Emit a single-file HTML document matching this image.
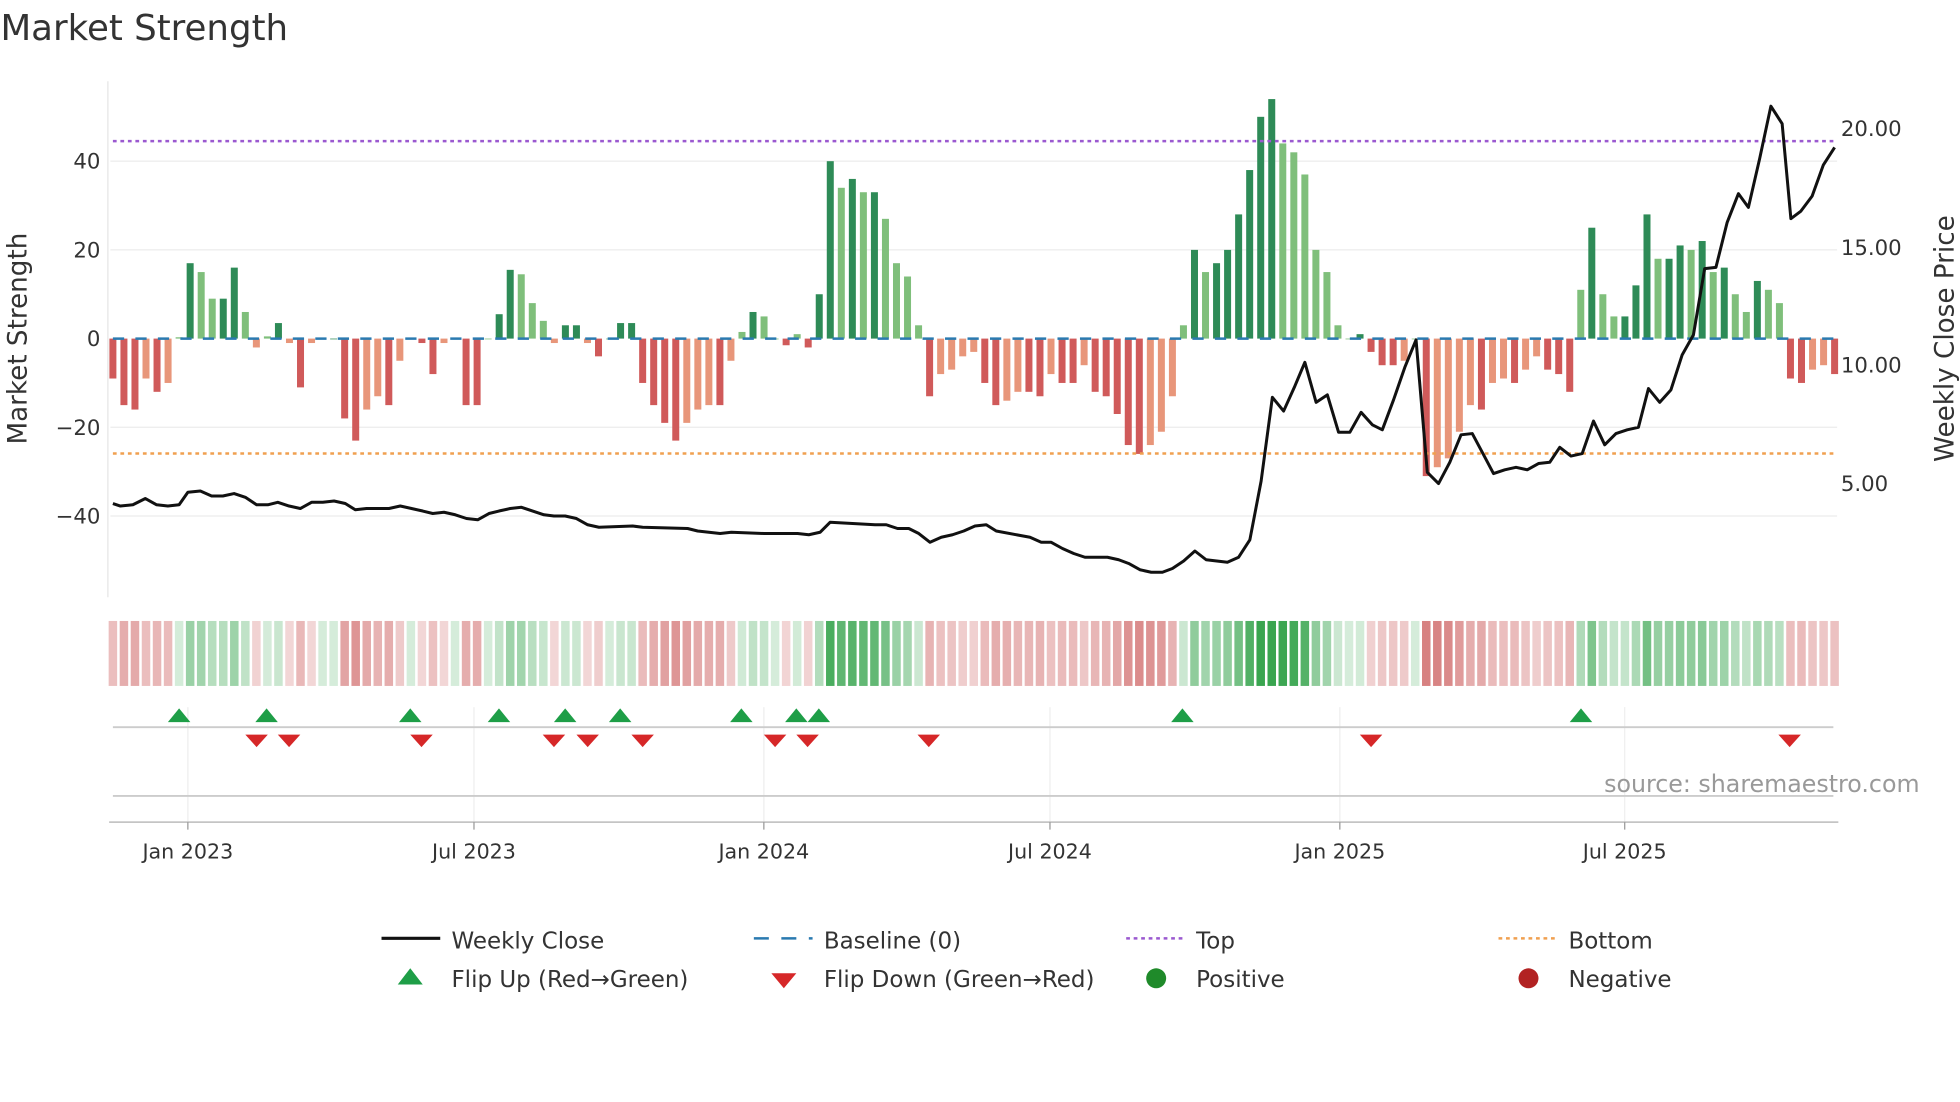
<!DOCTYPE html>
<html><head><meta charset="utf-8"><style>
html,body{margin:0;padding:0;background:#fff;width:1960px;height:1102px;overflow:hidden}
svg{display:block}
text{font-family:"DejaVu Sans","Liberation Sans",sans-serif;fill:#333}
</style></head><body>
<svg id="s" width="1960" height="1102" viewBox="0 0 1568 882" xmlns="http://www.w3.org/2000/svg">
<rect width="1568" height="882" fill="#fff"/>
<text x="0" y="32" font-size="28.5">Market Strength</text>
<g id="grid" stroke="#ececec" stroke-width="1">
<line x1="88" y1="129" x2="1470" y2="129"/><line x1="88" y1="200" x2="1470" y2="200"/>
<line x1="88" y1="342" x2="1470" y2="342"/><line x1="88" y1="413" x2="1470" y2="413"/>
</g>
<line x1="86" y1="65" x2="86" y2="478" stroke="#e6e6e6"/>
<g font-size="17" text-anchor="end">
<text x="80" y="135">40</text><text x="80" y="206">20</text><text x="80" y="277">0</text>
<text x="80" y="348">−20</text><text x="80" y="419">−40</text></g>
<g font-size="17"><text x="1473" y="109">20.00</text><text x="1473" y="204">15.00</text>
<text x="1473" y="298">10.00</text><text x="1473" y="393">5.00</text></g>
<text font-size="21" transform="translate(21,271) rotate(-90)" text-anchor="middle">Market Strength</text>
<text font-size="21" transform="translate(1563,271) rotate(-90)" text-anchor="middle">Weekly Close Price</text>
<g id="bars"></g>
<line x1="90" y1="271" x2="1468" y2="271" stroke="#2a7ab0" stroke-width="2" stroke-dasharray="9,9"/>
<line x1="90" y1="113" x2="1468" y2="113" stroke="#9b59d0" stroke-width="2" stroke-dasharray="3,3"/>
<line x1="90" y1="363" x2="1468" y2="363" stroke="#f0a050" stroke-width="2" stroke-dasharray="3,3"/>
<polyline id="pl" fill="none" stroke="#111" stroke-width="2.4" stroke-linejoin="round"/>
<g id="heat"></g>
<g stroke="#eee"><line x1="150" y1="566" x2="150" y2="658"/><line x1="379" y1="566" x2="379" y2="658"/><line x1="611" y1="566" x2="611" y2="658"/><line x1="840" y1="566" x2="840" y2="658"/><line x1="1072" y1="566" x2="1072" y2="658"/><line x1="1300" y1="566" x2="1300" y2="658"/></g>
<line x1="90" y1="582" x2="1467" y2="582" stroke="#ccc" stroke-width="1.5"/>
<line x1="90" y1="637" x2="1467" y2="637" stroke="#ccc" stroke-width="1.5"/>
<line x1="87" y1="658" x2="1471" y2="658" stroke="#bbb" stroke-width="1.2"/>
<g stroke="#999"><line x1="150" y1="658" x2="150" y2="664"/><line x1="379" y1="658" x2="379" y2="664"/><line x1="611" y1="658" x2="611" y2="664"/><line x1="840" y1="658" x2="840" y2="664"/><line x1="1072" y1="658" x2="1072" y2="664"/><line x1="1300" y1="658" x2="1300" y2="664"/></g>
<g id="tri"></g>
<text x="1536" y="634" font-size="19" text-anchor="end" style="fill:#999">source: sharemaestro.com</text>
<g font-size="16.5" text-anchor="middle"><text x="150" y="687">Jan 2023</text><text x="379" y="687">Jul 2023</text><text x="611" y="687">Jan 2024</text><text x="840" y="687">Jul 2024</text><text x="1072" y="687">Jan 2025</text><text x="1300" y="687">Jul 2025</text></g>
<g font-size="18.4">
<line x1="305" y1="751" x2="352" y2="751" stroke="#111" stroke-width="2.5"/><text x="361" y="759">Weekly Close</text>
<line x1="603" y1="751" x2="650" y2="751" stroke="#2a7ab0" stroke-width="2" stroke-dasharray="12,10"/><text x="659" y="759">Baseline (0)</text>
<line x1="901" y1="751" x2="948" y2="751" stroke="#9b59d0" stroke-width="2" stroke-dasharray="3,3"/><text x="957" y="759">Top</text>
<line x1="1199" y1="751" x2="1246" y2="751" stroke="#f0a050" stroke-width="2" stroke-dasharray="3,3"/><text x="1255" y="759">Bottom</text>
<polygon points="318,788 328,775 338,788" fill="#1e9e47"/><text x="361" y="790">Flip Up (Red→Green)</text>
<polygon points="617,779 627,791 637,779" fill="#d62728"/><text x="659" y="790">Flip Down (Green→Red)</text>
<circle cx="925" cy="783" r="8" fill="#1f8a2a"/><text x="957" y="790">Positive</text>
<circle cx="1223" cy="783" r="8" fill="#b22222"/><text x="1255" y="790">Negative</text>
</g>
</svg>
<script>
var v=[-9,-15,-16,-9,-12,-10,0.3,17,15,9,9,16,6,-2,0.5,3.5,-1,-11,-1,0,0,-18,-23,-16,-13,-15,-5,0,-1,-8,-1,0,-15,-15,0,5.5,15.5,14.5,8,4,-1,3,3,-1,-4,0,3.5,3.5,-10,-15,-19,-23,-19,-16,-15,-15,-5,1.5,6,5,0,-1.5,1,-2,10,40,34,36,33,33,27,17,14,3,-13,-8,-7,-4,-3,-10,-15,-14,-12,-12,-13,-8,-10,-10,-6,-12,-13,-17,-24,-26,-24,-21,-13,3,20,15,17,20,28,38,50,54,44,42,37,20,15,3,0,1,-3,-6,-6,-5,0,-31,-29,-27,-21,-15,-16,-10,-9,-10,-7,-4,-7,-8,-12,11,25,10,5,5,12,28,18,18,21,20,22,15,16,10,6,13,11,8,-9,-10,-7,-6,-8];
var NS="http://www.w3.org/2000/svg",n=v.length,x0=90,dx=(1468-90)/(n-1);
function el(g,t,a){var e=document.createElementNS(NS,t);for(var k in a)e.setAttribute(k,a[k]);document.getElementById(g).appendChild(e);}
for(var i=0;i<n;i++){var x=x0+i*dx,y=v[i],p=i?v[i-1]:0,dark=Math.abs(y)>=Math.abs(p);
var c=y>=0?(dark?"#2e8b57":"#7fbf7b"):(dark?"#d05a5a":"#e8967a");
var h=Math.abs(y)*3.55;el("bars","rect",{x:x-2.8,y:y>=0?271-h:271,width:5.6,height:Math.max(h,0.6),fill:c});
var hc;
if(y>=0){hc="rgba(46,160,70,"+(0.2+0.75*Math.min(Math.abs(y)/45,1))+")";}
else{hc="rgba(200,80,80,"+(0.22+0.5*Math.min(Math.abs(y)/30,1))+")";}
el("heat","rect",{x:x-3.4,y:497,width:6.8,height:52,fill:hc});}
var pts=[90,403,96,405,106,404,116,399,125,404,134,405,143,404,150,394,160,393,169,397,178,397,187,395,196,398,205,404,214,404,222,402,231,405,240,407,249,402,258,402,267,401,276,403,284,408,293,407,311,407,320,405,329,407,338,409,346,411,355,410,364,412,373,415,382,416,391,411,399,409,408,407,417,406,426,409,435,412,443,413,452,413,461,415,470,420,479,422,506,421,514,422,550,423,558,425,576,427,585,426,611,427,638,427,647,428,656,426,664,418,700,420,709,420,718,423,727,423,735,427,744,434,753,430,762,428,771,425,780,421,789,420,797,425,824,430,833,434,841,434,850,439,859,443,868,446,886,446,895,448,903,451,912,456,921,458,930,458,938,455,947,449,956,441,965,448,982,450,991,446,1000,432,1009,385,1018,318,1027,329,1036,309,1044,290,1053,322,1062,316,1071,346,1080,346,1089,330,1098,340,1106,344,1115,320,1124,294,1133,272,1142,378,1151,387,1160,370,1169,348,1178,347,1186,362,1195,379,1204,376,1213,374,1222,376,1231,371,1240,370,1248,358,1257,365,1266,363,1275,337,1284,356,1293,347,1302,344,1311,342,1319,311,1328,322,1337,312,1346,284,1355,268,1364,215,1373,214,1382,178,1391,155,1399,166,1408,127,1417,85,1426,99,1433,175,1441,169,1450,157,1459,132,1468,118];
var s="";for(var j=0;j<pts.length;j+=2)s+=pts[j]+","+pts[j+1]+" ";document.getElementById("pl").setAttribute("points",s);
[143,213,328,399,452,496,593,637,655,946,1265].forEach(function(x){el("tri","polygon",{points:(x-9)+",578 "+x+",567 "+(x+9)+",578",fill:"#1e9e47"});});
[205,231,337,443,470,514,620,646,743,1097,1432].forEach(function(x){el("tri","polygon",{points:(x-9)+",588 "+(x+9)+",588 "+x+",598",fill:"#d62728"});});
</script>
</body></html>
